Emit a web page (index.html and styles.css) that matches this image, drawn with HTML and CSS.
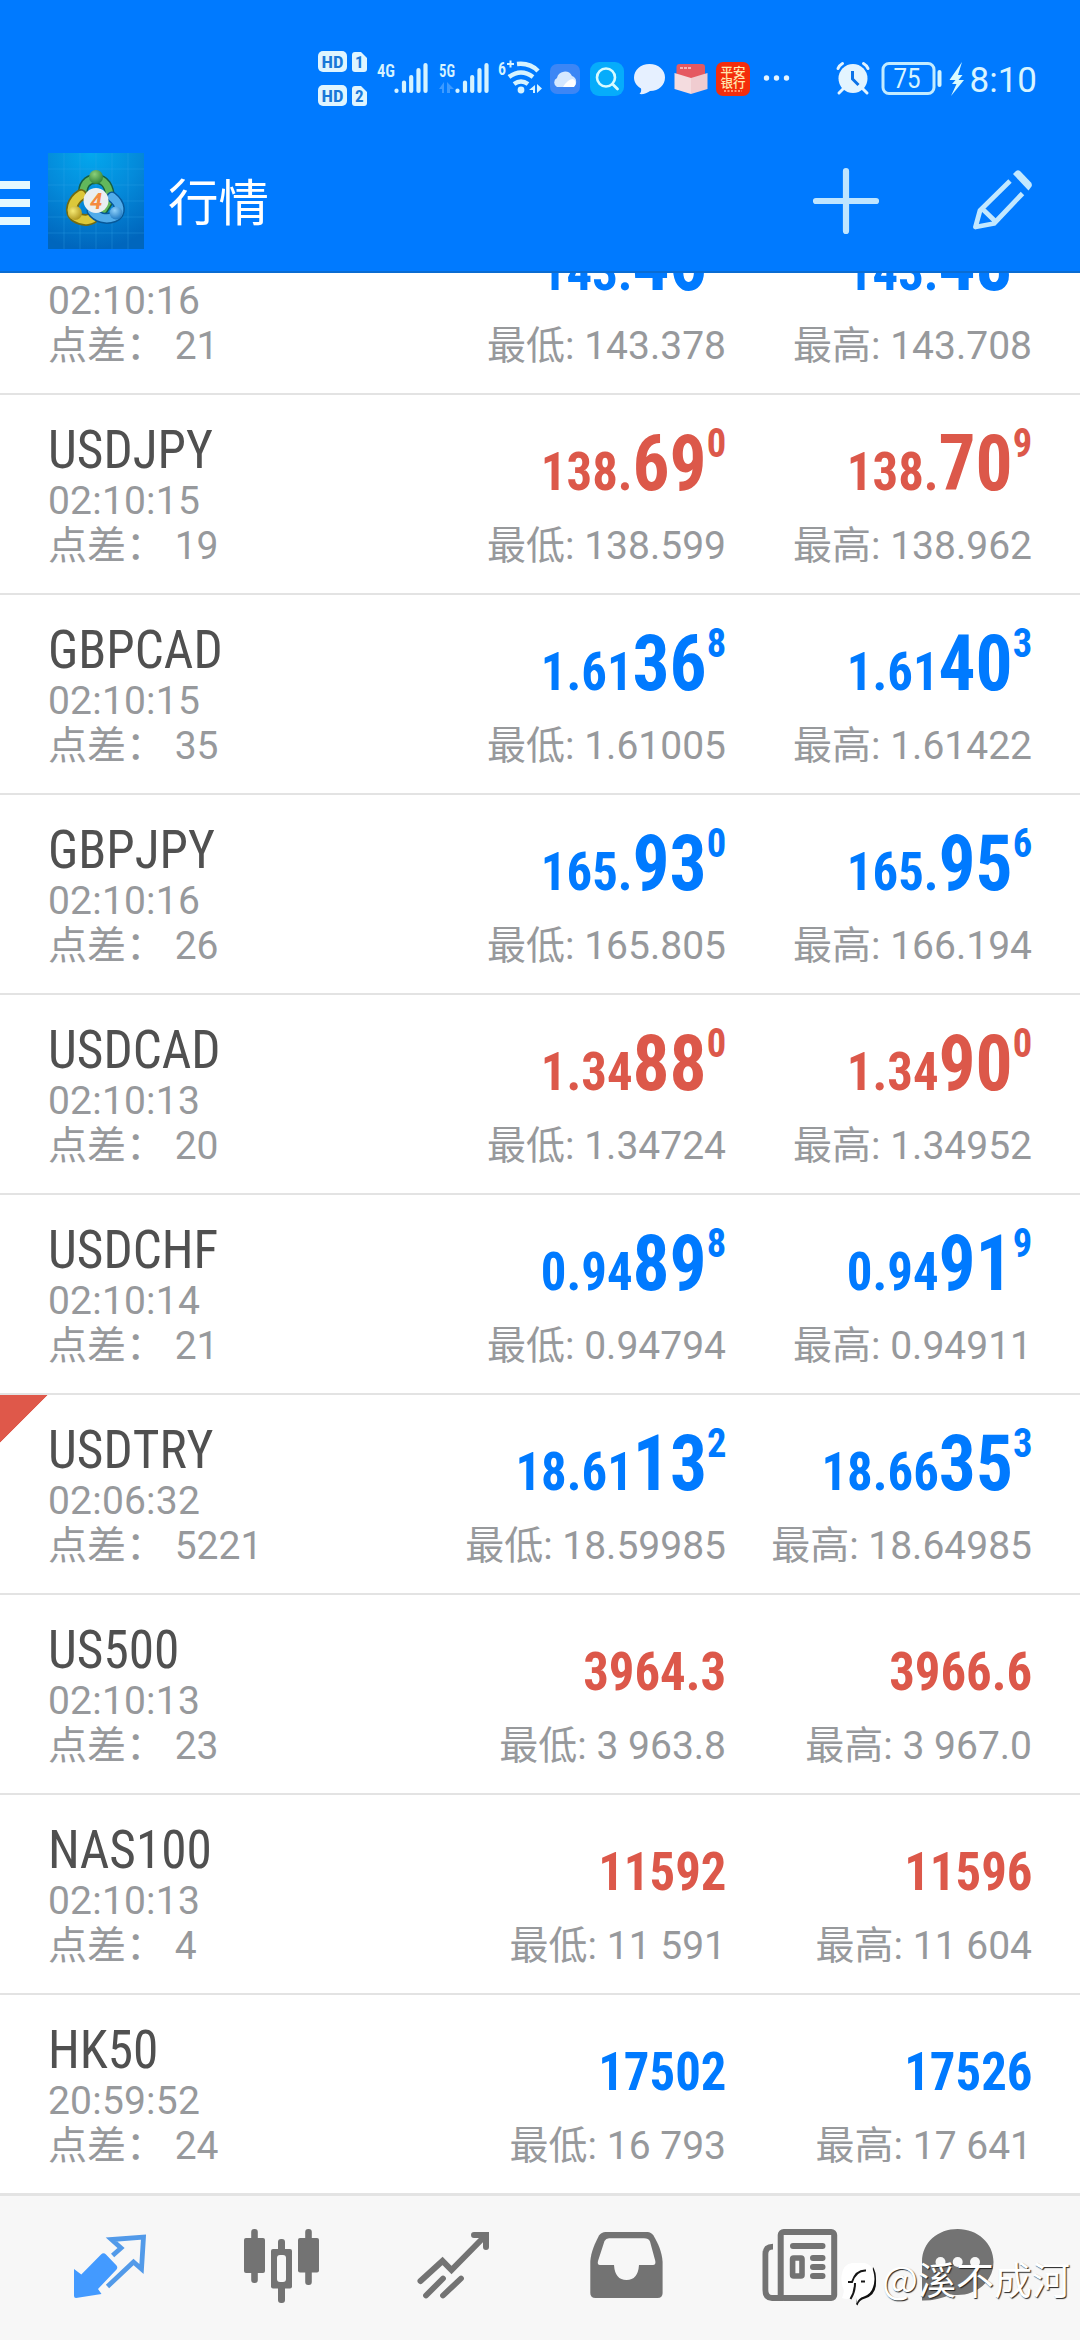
FILE: index.html
```html
<!DOCTYPE html>
<html lang="zh-CN">
<head>
<meta charset="utf-8">
<title>行情</title>
<link rel="stylesheet" href="styles.css">
</head>
<body>
<div class="app">
<header class="header">
  <div class="status">
    <svg class="status-left" viewBox="310 40 490 80" width="490" height="80">
      <g fill="#dff5ff">
        <rect x="318" y="51" width="29" height="21" rx="5"/><path d="M355 52h6l6 6v11q0 3-3 3h-9q-3 0-3-3V55q0-3 3-3z"/>
        <rect x="318" y="85" width="29" height="21" rx="5"/><path d="M355 86h6l6 6v11q0 3-3 3h-9q-3 0-3-3V89q0-3 3-3z"/>
      </g>
      <g class="narrow" fill="#1a78d8" font-size="17" font-weight="700">
        <text x="321.500" y="67.500" textLength="22" lengthAdjust="spacingAndGlyphs">HD</text><text x="355" y="68">1</text>
        <text x="321.500" y="101.500" textLength="22" lengthAdjust="spacingAndGlyphs">HD</text><text x="355" y="102">2</text>
      </g>
      <g class="narrow" fill="#d6f3ff" font-size="19" font-weight="600">
        <text x="377" y="77" textLength="18" lengthAdjust="spacingAndGlyphs">4G</text>
        <text x="439" y="77" textLength="16" lengthAdjust="spacingAndGlyphs">5G</text>
        <text x="498" y="75" textLength="8" lengthAdjust="spacingAndGlyphs">6</text>
      </g>
      <path d="M507 64h7M510.500 60.500v7" stroke="#d6f3ff" stroke-width="2"/>
      <g stroke="#d6f3ff" stroke-width="4.200" stroke-linecap="round">
        <path d="M396.500 90.500v.5M404 82.500v8.500M411.200 77v14M418.500 70v21M425.500 65v26"/>
        <path d="M457.500 90.500v.5M465 82.500v8.500M472.200 77v14M479.500 70v21M486.500 65v26"/>
      </g>
      <path d="M444 82v11h-2v-4h-3zM447 93v-11l7 7h-4v4z" fill="#3e9bff"/>
      <g fill="none" stroke="#d6f3ff" stroke-width="4.500">
        <path d="M517 64q13-1.500 21 7M509 77q12-9 24 0M514 84q7-5 14 0"/>
      </g>
      <circle cx="521" cy="90" r="3.400" fill="#d6f3ff"/>
      <path d="M535 85v8h-2v-3h-4zM537 84v9l5-4.500z" fill="#d6f3ff"/>
      <rect x="550" y="64" width="30" height="30" rx="7" fill="#3c86f5"/>
      <path d="M557 87a5 5 0 0 1 0-9a8 8 0 0 1 15-2a6 6 0 0 1 1 11z" fill="#d5e8ff"/><path d="M563 87q5-8 10-8a5 5 0 0 1 1 8z" fill="#fff"/>
      <rect x="590" y="62" width="34" height="34" rx="9" fill="#06acfb"/>
      <circle cx="606" cy="77.500" r="9" fill="none" stroke="#d7fbff" stroke-width="2.600"/><path d="M612.500 84l5 5" stroke="#d7fbff" stroke-width="2.800" stroke-linecap="round"/>
      <path d="M649.500 64c9 0 15.500 6 15.500 13.500S659 91 650 91c-3 2.500-7 3.500-10.500 3 1.500-1.500 2-3.500 1.500-5.500-4-2.500-7-6-7-11C634 70 640.500 64 649.500 64z" fill="#e6f0ff"/>
      <rect x="676.500" y="64" width="28.500" height="17" rx="3" fill="#e55961"/><path d="M680 68h12" stroke="#f7b2b4" stroke-width="2" stroke-dasharray="3 1"/>
      <path d="M674.500 73l16.500 5v16l-16.500-5z" fill="#f4dcdf"/><path d="M707.500 73l-16.500 5v16l16.500-5z" fill="#f0ccd0"/>
      <rect x="716" y="62" width="34" height="34" rx="7" fill="#f42d0c"/>
      <g class="cjk" fill="#ffe9b0" font-size="12.500"><text x="720.500" y="76.500">平安</text><text x="720.500" y="87.500">银行</text></g>
      <path d="M724 91h18" stroke="#ff9a70" stroke-width="2" stroke-dasharray="2 1.500"/>
      <g fill="#e6f5ff"><circle cx="766.500" cy="78" r="2.700"/><circle cx="776.500" cy="78" r="2.700"/><circle cx="786.500" cy="78" r="2.700"/></g>
    </svg>
    <svg class="status-right" viewBox="830 40 210 80" width="210" height="80">
      <circle cx="853" cy="78.500" r="14.500" fill="#e3f4ff"/>
      <path d="M838 68.500q1-3 4.500-5M868 68.500q-1-3-4.500-5M843 89l-4 4M863 89l4 4" stroke="#e3f4ff" stroke-width="3" stroke-linecap="round" fill="none"/>
      <path d="M852.500 71v8l6 6" stroke="#0b72e8" stroke-width="3" fill="none"/>
      <rect x="883" y="63.500" width="51" height="30" rx="6" fill="none" stroke="#c3ecff" stroke-width="3"/>
      <path d="M939.500 72v13" stroke="#d6f5ff" stroke-width="4" stroke-linecap="round"/>
      <g class="roboto" fill="#d8f4ff"><text x="893.500" y="87.500" font-size="27" textLength="27" lengthAdjust="spacingAndGlyphs">75</text>
      <text x="969.500" y="92" font-size="35.500" textLength="67.500" lengthAdjust="spacingAndGlyphs">8:10</text></g>
      <path d="M962 62l-12.500 18h6l-3.500 4h4.500l-5.500 12L964 80h-5.500l4-5h-4.500z" fill="#d8fbff"/>
    </svg>
  </div>
  <div class="toolbar">
    <svg class="menu" viewBox="0 0 30 96" width="30" height="96"><path d="M0 32h30M0 50h30M0 68h30" stroke="#e4f8ff" stroke-width="8"/></svg>
    <svg class="logo" viewBox="0 0 96 96" width="96" height="96">
      <defs>
        <radialGradient id="bg" cx=".45" cy="0" r="1"><stop offset="0" stop-color="#03a8ee"/><stop offset=".5" stop-color="#048ada"/><stop offset="1" stop-color="#0066bd"/></radialGradient>
        <radialGradient id="green" cx=".4" cy=".3" r=".8"><stop offset="0" stop-color="#8bd07a"/><stop offset="1" stop-color="#24772f"/></radialGradient>
        <radialGradient id="gold" cx=".35" cy=".35" r=".8"><stop offset="0" stop-color="#f6ea74"/><stop offset="1" stop-color="#a68a10"/></radialGradient>
        <radialGradient id="sky" cx=".4" cy=".3" r=".8"><stop offset="0" stop-color="#8ed0fa"/><stop offset="1" stop-color="#1370bd"/></radialGradient>
      </defs>
      <rect width="96" height="96" fill="url(#bg)"/>
      <path d="M16 0v96M32 0v96M48 0v96M64 0v96M80 0v96M0 16h96M0 32h96M0 48h96M0 64h96M0 80h96" stroke="#35a9e8" stroke-opacity=".3"/>
      <g fill="none" stroke-linecap="round">
        <path d="M35 43C34 32 39 26 48 26s14 8 14 20L55 57" stroke="#165f42" stroke-width="10"/><path d="M35 43C34 32 39 26 48 26s14 8 14 20L55 57" stroke="#62b85c" stroke-width="7"/>
        <path d="M33 42C25 47 20 59 28 64s16 3 20-2" stroke="#726a12" stroke-width="12"/><path d="M33 42C25 47 20 59 28 64s16 3 20-2" stroke="#dcc83a" stroke-width="8.500"/>
        <path d="M64 44c9 7 10 17 2 20s-17 1-22-6" stroke="#075899" stroke-width="11"/><path d="M64 44c9 7 10 17 2 20s-17 1-22-6" stroke="#51acea" stroke-width="8"/>
      </g>
      <circle cx="48" cy="24" r="7" fill="url(#green)"/><circle cx="27" cy="60" r="7" fill="url(#gold)"/><circle cx="68" cy="60" r="6.500" fill="url(#sky)"/>
      <circle cx="48" cy="47.500" r="12.500" fill="#e9eff2"/>
      <text class="roboto" x="48" y="55.500" text-anchor="middle" font-size="22" font-weight="700" font-style="italic" fill="#f58b40">4</text>
    </svg>
    <h1 class="title">行情</h1>
    <svg class="add" viewBox="810 153 72 96" width="72" height="96"><path d="M816 201h60M846 171v60" stroke="#bfe5ff" stroke-width="6.200" stroke-linecap="round"/></svg>
    <svg class="edit" viewBox="966 153 72 96" width="72" height="96">
      <g fill="none" stroke="#c2e8ff" stroke-width="4.800" stroke-linejoin="round"><path d="M1010 181L980 210.500L975.500 227L994 223.500L1022.500 193.500M982 208.500L996 222"/></g>
      <path d="M1013 174l3-3q2-1.500 4 0l11 11.500q1.500 2 .5 4l-3 4z" fill="#c2e8ff"/>
    </svg>
  </div>
</header>

<main class="quotes">
  <section class="quote up"><div class="info"><b class="name">EURJPY</b><span class="time">02:10:16</span><span class="spread">点差： 21</span></div><div class="side"><div class="price"><span>143.</span><span class="pips">46</span><span class="frac">0</span></div><div class="limit">最低: 143.378</div></div><div class="side"><div class="price"><span>143.</span><span class="pips">48</span><span class="frac">1</span></div><div class="limit">最高: 143.708</div></div></section>
  <section class="quote down"><div class="info"><b class="name">USDJPY</b><span class="time">02:10:15</span><span class="spread">点差： 19</span></div><div class="side"><div class="price"><span>138.</span><span class="pips">69</span><span class="frac">0</span></div><div class="limit">最低: 138.599</div></div><div class="side"><div class="price"><span>138.</span><span class="pips">70</span><span class="frac">9</span></div><div class="limit">最高: 138.962</div></div></section>
  <section class="quote up"><div class="info"><b class="name">GBPCAD</b><span class="time">02:10:15</span><span class="spread">点差： 35</span></div><div class="side"><div class="price"><span>1.61</span><span class="pips">36</span><span class="frac">8</span></div><div class="limit">最低: 1.61005</div></div><div class="side"><div class="price"><span>1.61</span><span class="pips">40</span><span class="frac">3</span></div><div class="limit">最高: 1.61422</div></div></section>
  <section class="quote up"><div class="info"><b class="name">GBPJPY</b><span class="time">02:10:16</span><span class="spread">点差： 26</span></div><div class="side"><div class="price"><span>165.</span><span class="pips">93</span><span class="frac">0</span></div><div class="limit">最低: 165.805</div></div><div class="side"><div class="price"><span>165.</span><span class="pips">95</span><span class="frac">6</span></div><div class="limit">最高: 166.194</div></div></section>
  <section class="quote down"><div class="info"><b class="name">USDCAD</b><span class="time">02:10:13</span><span class="spread">点差： 20</span></div><div class="side"><div class="price"><span>1.34</span><span class="pips">88</span><span class="frac">0</span></div><div class="limit">最低: 1.34724</div></div><div class="side"><div class="price"><span>1.34</span><span class="pips">90</span><span class="frac">0</span></div><div class="limit">最高: 1.34952</div></div></section>
  <section class="quote up"><div class="info"><b class="name">USDCHF</b><span class="time">02:10:14</span><span class="spread">点差： 21</span></div><div class="side"><div class="price"><span>0.94</span><span class="pips">89</span><span class="frac">8</span></div><div class="limit">最低: 0.94794</div></div><div class="side"><div class="price"><span>0.94</span><span class="pips">91</span><span class="frac">9</span></div><div class="limit">最高: 0.94911</div></div></section>
  <section class="quote up flagged"><div class="info"><b class="name">USDTRY</b><span class="time">02:06:32</span><span class="spread">点差： 5221</span></div><div class="side"><div class="price"><span>18.61</span><span class="pips">13</span><span class="frac">2</span></div><div class="limit">最低: 18.59985</div></div><div class="side"><div class="price"><span>18.66</span><span class="pips">35</span><span class="frac">3</span></div><div class="limit">最高: 18.64985</div></div></section>
  <section class="quote down"><div class="info"><b class="name">US500</b><span class="time">02:10:13</span><span class="spread">点差： 23</span></div><div class="side"><div class="price plain"><span>3964.3</span></div><div class="limit">最低: 3 963.8</div></div><div class="side"><div class="price plain"><span>3966.6</span></div><div class="limit">最高: 3 967.0</div></div></section>
  <section class="quote down"><div class="info"><b class="name">NAS100</b><span class="time">02:10:13</span><span class="spread">点差： 4</span></div><div class="side"><div class="price plain"><span>11592</span></div><div class="limit">最低: 11 591</div></div><div class="side"><div class="price plain"><span>11596</span></div><div class="limit">最高: 11 604</div></div></section>
  <section class="quote up"><div class="info"><b class="name">HK50</b><span class="time">20:59:52</span><span class="spread">点差： 24</span></div><div class="side"><div class="price plain"><span>17502</span></div><div class="limit">最低: 16 793</div></div><div class="side"><div class="price plain"><span>17526</span></div><div class="limit">最高: 17 641</div></div></section>
</main>

<nav class="tabs">
  <svg viewBox="24 2196 172 144"><path d="M74 2269l7.300 5.500L101 2254.500q2.500-2.500 5 0l10.500 11q1.500 2 0 4L98 2289l3.500 5L76 2298q-2 0-2-2z" fill="#439aff"/><path d="M112.600 2255.500L121 2248L111.500 2239.500L143.500 2237L141.500 2269L133.500 2262L107.500 2286.500" fill="none" stroke="#529ae9" stroke-width="4.800"/></svg>
  <svg viewBox="196 2196 172 144"><g fill="#737373"><rect x="251.200" y="2229" width="6.600" height="54" rx="3"/><rect x="244" y="2238" width="21" height="35" rx="2"/><rect x="278" y="2239" width="7" height="64" rx="3"/><rect x="271" y="2249" width="21" height="39.500" rx="2"/><rect x="305.200" y="2229" width="6.600" height="56" rx="3"/><rect x="298" y="2238" width="21" height="34.500" rx="2"/></g><rect x="277" y="2255" width="9" height="27" rx="3" fill="#f7f7f7"/></svg>
  <svg viewBox="368 2196 172 144"><g fill="none" stroke="#737373" stroke-width="6" stroke-linecap="round"><path d="M420.500 2281L442.500 2261L451.500 2270L485 2236M474 2235H486V2247"/><path d="M426 2295.500L443 2278.500M443 2295.500L461 2278.500" stroke-width="5.800"/></g></svg>
  <svg viewBox="540 2196 172 144"><path d="M590.300 2261C591 2252 595 2243 599 2235.500Q601.500 2232 605.500 2232H647.500Q651 2232 653.500 2235.500C658 2243 662 2252 662.600 2262V2293Q662.600 2298 657.500 2298H595.500Q590.300 2298 590.300 2293z" fill="#737373"/><path d="M609 2238.300H644Q648.500 2238.300 650 2241.500L655.300 2261Q656 2265 653 2265H639Q638 2280 626.500 2280T614 2265H600Q597 2265 598 2261L604.500 2241Q606 2238.300 609 2238.300z" fill="#f7f7f7"/></svg>
  <svg viewBox="712 2196 172 144"><g fill="none" stroke="#737373"><rect x="780.700" y="2232" width="53.500" height="66" rx="3" stroke-width="6"/><path d="M773 2246.700Q765.400 2246.700 765.400 2254V2290Q765.400 2298 772 2298H783" stroke-width="5.800"/><path d="M793 2246H822.500M813 2258h9.500M813 2267h9.500M813 2276h9.500" stroke-width="6" stroke-linecap="round"/><rect x="792.600" y="2258" width="9.400" height="18" rx="1" stroke-width="5.600"/></g></svg>
  <svg viewBox="884 2196 172 144"><path d="M922 2262C922 2242 938 2229 957.700 2229S993.500 2243 993.500 2262S977 2295 957.700 2295Q954 2295 951 2294.500Q936 2301 922 2300.500z" fill="#737373"/><g fill="#f7f7f7"><circle cx="940.500" cy="2262" r="5"/><circle cx="957.700" cy="2262" r="5"/><circle cx="975" cy="2262" r="5"/></g></svg>
</nav>
<div class="watermark">
  <svg viewBox="840 2258 38 46" width="38" height="46"><path d="M873 2265Q876.500 2270 876 2281Q876 2293 865 2296.500Q859 2298 857.500 2303.500L856 2302L857 2296L870 2290z" fill="#111"/><path d="M852 2261H864Q874 2262 874.500 2277Q874 2291 864 2294.500Q858 2296 856.500 2302Q857 2295 855.500 2293.500Q849 2299 842 2296Q845 2289 843 2286Q841 2282 841.500 2274Q843 2262 852 2261z" fill="#fff"/><path d="M848 2280H852Q856 2268 866 2268.500M861 2279.500h4M855 2281Q855 2290 850.500 2297" fill="none" stroke="#161616" stroke-width="2"/></svg>
  <span>@溪不成河</span>
</div>
</div>
</body>
</html>
```
FILE: styles.css
```css
* { box-sizing: border-box; margin: 0; padding: 0; }
body { font-family: Roboto, "Noto Sans CJK SC", sans-serif; font-kerning: none; background: #fff; }
svg { display: block; flex: none; }
.roboto { font-family: Roboto, sans-serif; }
.narrow { font-family: "Roboto Condensed", Roboto, sans-serif; }
.cjk { font-family: "Noto Sans CJK SC", sans-serif; font-weight: 500; }

.app { position: relative; display: flex; flex-direction: column; width: 1080px; height: 2340px; overflow: hidden; }

.header { flex: none; height: 273px; background: #007aff; border-bottom: 2px solid #0a6cd2; }
.status { display: flex; justify-content: space-between; height: 153px; padding: 40px 40px 0 310px; }
.toolbar { display: flex; align-items: center; height: 96px; }
.logo { margin-left: 18px; }
.title { margin-left: 24px; padding-top: 6px; font-size: 50.5px; line-height: 90px; font-weight: 400; color: #fff; }
.add { margin-left: auto; }
.edit { margin: 0 42px 0 84px; }

.quotes { flex: 1; min-height: 0; display: flex; flex-direction: column; justify-content: flex-end; overflow: hidden; }
.quote { flex: none; display: flex; height: 200px; padding: 0 48px; border-bottom: 2px solid #e3e3e3; }
.quote:last-child { height: 198px; border-bottom: 0; }
.up { --tone: #007aff; }
.down { --tone: #dc584a; }
.flagged { background: linear-gradient(135deg, #df584a 33.5px, transparent 34px); }
.info { flex: 1; display: flex; flex-direction: column; padding-top: 24px; white-space: pre; }
.name { font: 400 54px/62px "Roboto Condensed", Roboto, sans-serif; font-kerning: none; color: #505050; transform: scaleX(.95); transform-origin: left; }
.time, .spread, .limit { font-size: 39px; line-height: 45px; color: #97999c; }
.time { line-height: 40px; letter-spacing: .2px; }
.spread { padding-top: 3px; }
.side { width: 306px; display: flex; flex-direction: column; align-items: flex-end; white-space: pre; }
.price { display: flex; align-items: baseline; height: 129px; padding-top: 23px; font: 700 54px/92px "Roboto Condensed", Roboto, sans-serif; font-kerning: none; color: var(--tone); transform: scaleX(.94); transform-origin: right; }
.plain { padding-top: 31px; }
.pips { font-size: 78px; }
.frac { align-self: flex-start; font-size: 41px; line-height: 50px; }

.tabs { flex: none; display: flex; height: 147px; padding: 0 24px; background: #f7f7f7; border-top: 3px solid #e3e3e3; }
.tabs svg { width: 172px; height: 144px; }

.watermark { position: absolute; left: 840px; top: 2250px; display: flex; align-items: center; gap: 4px; font: 400 38px/54px "Noto Sans CJK SC", sans-serif; color: #fff; text-shadow: 1px 1px 1px #222; white-space: nowrap; }
.watermark svg { margin-top: 10px; }
```
